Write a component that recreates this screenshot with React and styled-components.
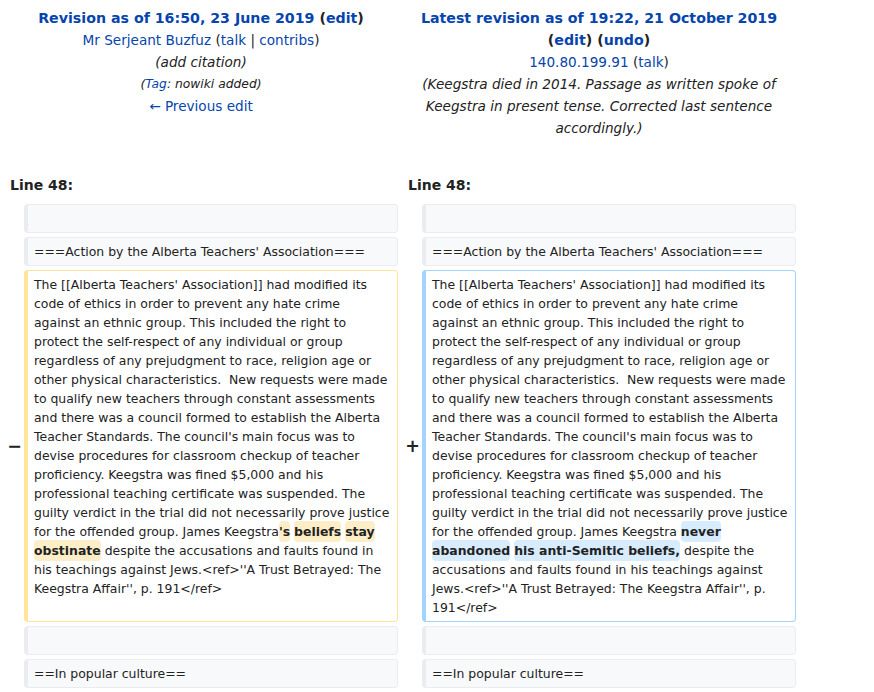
import React from 'react';
import styled, { createGlobalStyle } from 'styled-components';

const GlobalStyle = createGlobalStyle`
  body {
    margin: 0;
    background: #fff;
    color: #222;
    font-family: "DejaVu Sans", "Liberation Sans", sans-serif;
  }
`;

// lines as the diff shows them
const commonLines = [
  "The [[Alberta Teachers' Association]] had modified its",
  'code of ethics in order to prevent any hate crime',
  'against an ethnic group. This included the right to',
  'protect the self-respect of any individual or group',
  'regardless of any prejudgment to race, religion age or',
  'other physical characteristics.  New requests were made',
  'to qualify new teachers through constant assessments',
  'and there was a council formed to establish the Alberta',
  "Teacher Standards. The council's main focus was to",
  'devise procedures for classroom checkup of teacher',
  'proficiency. Keegstra was fined $5,000 and his',
  'professional teaching certificate was suspended. The',
  'guilty verdict in the trial did not necessarily prove justice',
];

const App = () => {
  return (
    <>
      <GlobalStyle />
      <DiffTable>
        <TitleCell>
          <TitleLine bold>
            <Link>Revision as of 16:50, 23 June 2019</Link> (<Link>edit</Link>)
          </TitleLine>
          <TitleLine>
            <Link>Mr Serjeant Buzfuz</Link> (<Link>talk</Link> | <Link>contribs</Link>)
          </TitleLine>
          <Comment>(add citation)</Comment>
          <Tags>
            (<Link>Tag</Link>: nowiki added)
          </Tags>
          <TitleLine>
            <Link>← Previous edit</Link>
          </TitleLine>
        </TitleCell>
        <TitleCell>
          <TitleLine bold>
            <Link>Latest revision as of 19:22, 21 October 2019</Link> (<Link>edit</Link>) (<Link>undo</Link>)
          </TitleLine>
          <TitleLine>
            <Link>140.80.199.91</Link> (<Link>talk</Link>)
          </TitleLine>
          <Comment>
            (Keegstra died in 2014. Passage as written spoke of Keegstra in present tense. Corrected last sentence accordingly.)
          </Comment>
        </TitleCell>

        <LineNo>Line 48:</LineNo>
        <LineNo>Line 48:</LineNo>

        <Marker />
        <Context>{' '}</Context>
        <Marker />
        <Context>{' '}</Context>

        <Marker />
        <Context>===Action by the Alberta Teachers' Association===</Context>
        <Marker />
        <Context>===Action by the Alberta Teachers' Association===</Context>

        <Marker>−</Marker>
        <Changed kind="del">
          {commonLines.map((l, i) => <Line key={i}>{l}</Line>)}
          <Line>
            for the offended group. James Keegstra<Change kind="del">'s</Change>{' '}
            <Change kind="del">beliefs</Change> <Change kind="del">stay</Change>
          </Line>
          <Line>
            <Change kind="del">obstinate</Change> despite the accusations and faults found in
          </Line>
          <Line>his teachings against Jews.&lt;ref&gt;''A Trust Betrayed: The</Line>
          <Line>Keegstra Affair'', p. 191&lt;/ref&gt;</Line>
        </Changed>
        <Marker>+</Marker>
        <Changed kind="ins">
          {commonLines.map((l, i) => <Line key={i}>{l}</Line>)}
          <Line>
            for the offended group. James Keegstra <Change kind="ins">never</Change>
          </Line>
          <Line>
            <Change kind="ins">abandoned</Change> <Change kind="ins">his anti-Semitic beliefs,</Change> despite the
          </Line>
          <Line>accusations and faults found in his teachings against</Line>
          <Line>Jews.&lt;ref&gt;''A Trust Betrayed: The Keegstra Affair'', p.</Line>
          <Line>191&lt;/ref&gt;</Line>
        </Changed>

        <Marker />
        <Context>{' '}</Context>
        <Marker />
        <Context>{' '}</Context>

        <Marker />
        <Context>==In popular culture==</Context>
        <Marker />
        <Context>==In popular culture==</Context>
      </DiffTable>
    </>
  );
};

const DiffTable = styled.div`
  display: grid;
  grid-template-columns: 16px 374px 16px 374px;
  column-gap: 4px;
  row-gap: 4px;
  padding: 0 4px;
  width: 800px;
  box-sizing: border-box;
`;

const TitleCell = styled.div`
  grid-column: span 2;
  text-align: center;
  font-size: 13.6px;
  line-height: 22px;
  padding: 7px 4px 31px;
`;

const TitleLine = styled.div`
  font-weight: ${props => (props.bold ? 'bold' : 'normal')};
  font-size: ${props => (props.bold ? '14.2px' : '13.6px')};
`;

const Link = styled.a`
  color: #0645ad;
  text-decoration: none;
  cursor: pointer;
`;

const Comment = styled.div`
  font-style: italic;
  color: #222;
`;

const Tags = styled.div`
  font-style: italic;
  font-size: 12.3px;
`;

const LineNo = styled.div`
  grid-column: span 2;
  font-weight: bold;
  font-size: 14px;
  line-height: 22px;
  padding: 0 6px 4px;
`;

const Marker = styled.div`
  align-self: center;
  text-align: right;
  margin-right: -2px;
  font-weight: bold;
  font-size: 17.5px;
  line-height: 1.2;
  white-space: nowrap;
`;

const Cell = styled.div`
  font-size: 12.45px;
  line-height: 19px;
  padding: 4px 6px;
  white-space: pre-wrap;
  border-style: solid;
  border-width: 1px 1px 1px 4px;
  border-radius: 4px;
  box-sizing: border-box;
`;

const Line = styled.div`
  white-space: pre;
`;

const Context = styled(Cell)`
  background: #f8f9fa;
  border-color: #eaecf0;
  color: #222;
`;

const Changed = styled(Cell)`
  background: #fff;
  border-color: ${props => (props.kind === 'ins' ? '#a3d3ff' : '#ffe49c')};
`;

const Change = styled.span`
  font-weight: bold;
  border-radius: 4px;
  padding: 3px 0;
  background: ${props => (props.kind === 'ins' ? '#d8ecff' : '#feeec8')};
`;

export default App;
